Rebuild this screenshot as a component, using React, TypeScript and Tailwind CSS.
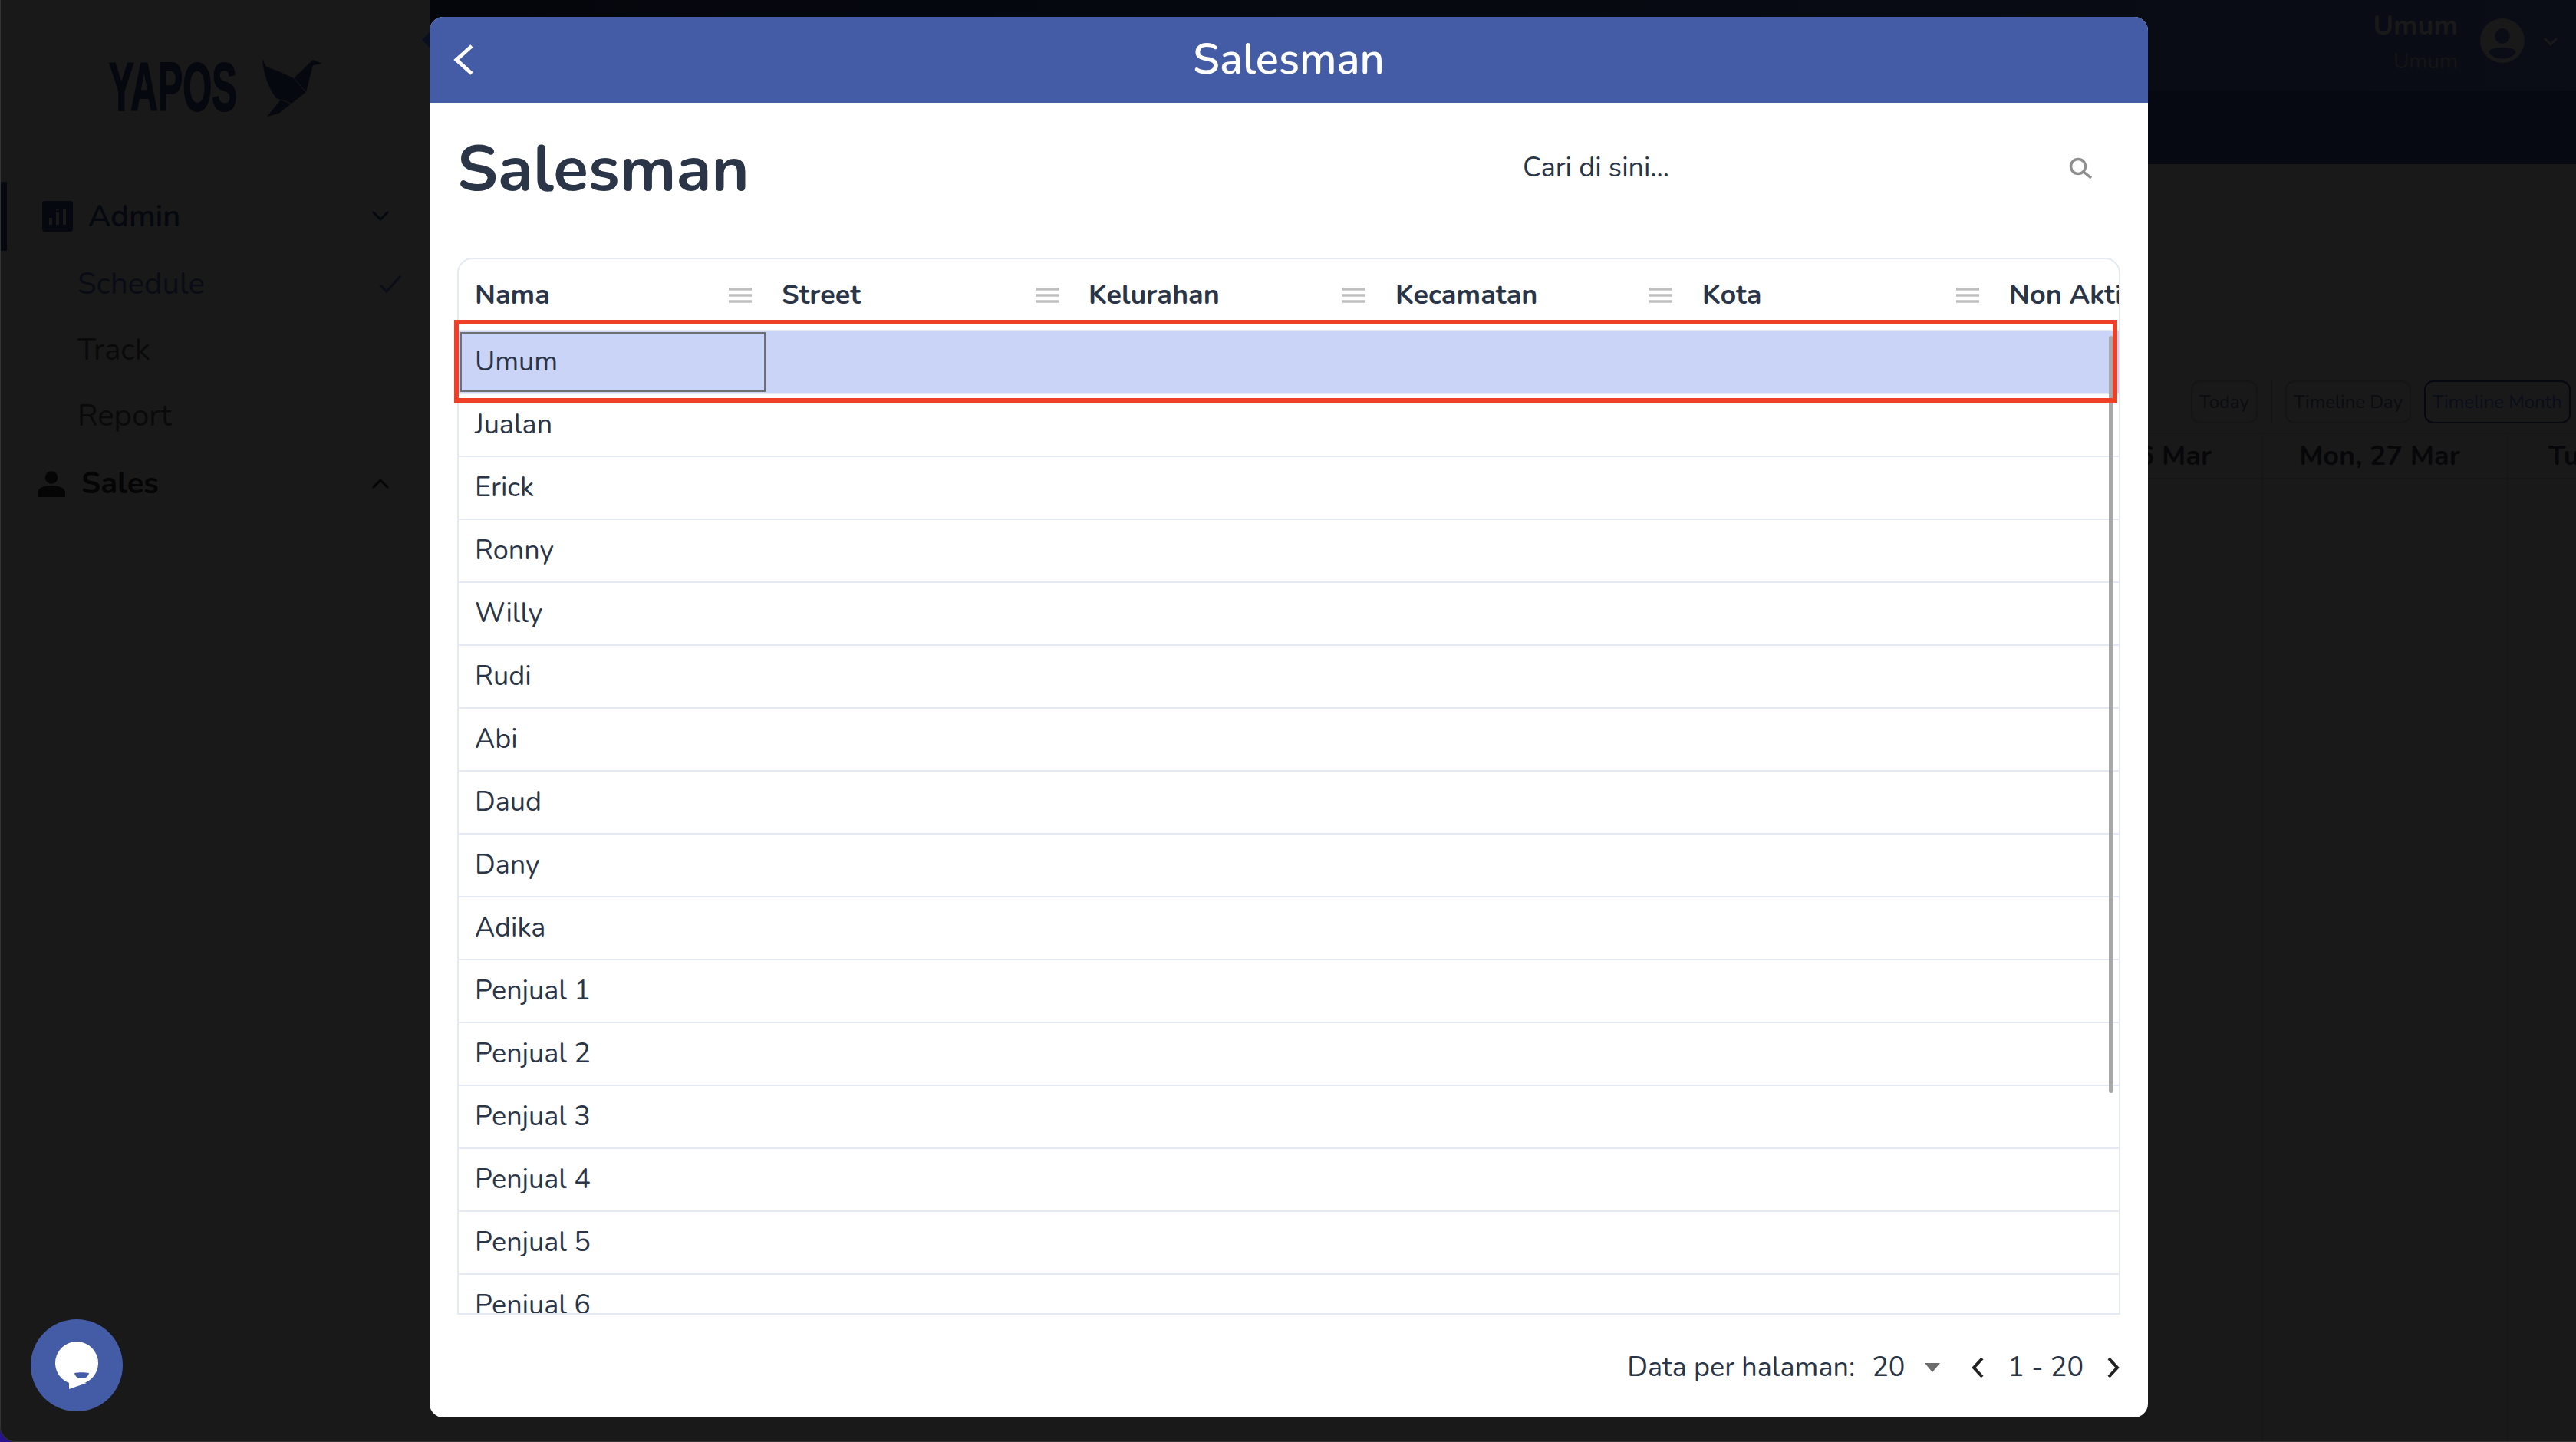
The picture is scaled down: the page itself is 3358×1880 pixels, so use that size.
import React from "react";

const rows = ["Jualan","Erick","Ronny","Willy","Rudi","Abi","Daud","Dany","Adika","Penjual 1","Penjual 2","Penjual 3","Penjual 4","Penjual 5","Penjual 6"];
const cols = ["Nama","Street","Kelurahan","Kecamatan","Kota","Non Aktif"];

function Grip() {
  return (
    <svg width="30" height="20" viewBox="0 0 30 20" className="shrink-0">
      <path d="M0 2h30M0 10h30M0 18h30" stroke="#c0c0c0" strokeWidth="3.500" />
    </svg>
  );
}

export default function App() {
  return (
    <div className="relative w-[3358px] h-[1880px] overflow-hidden bg-[#2a1190] font-['Nunito','Noto_Sans',sans-serif] text-[#2a3547]">
      <div className="flex h-full rounded-bl-[20px] overflow-hidden bg-[#191919]">
        <aside className="w-[560px] shrink-0 bg-[#191919] flex flex-col">
          <div className="h-[237px] pt-[63px] pl-[142px] flex items-start">
            <span className="block w-[198px] text-[89px] leading-[100px] font-bold text-[#05080f] font-['Liberation_Sans',sans-serif] scale-x-[0.55] origin-left whitespace-nowrap [-webkit-text-stroke:2px_#05080f]">YAPOS</span>
            <svg width="82" height="80" viewBox="0 0 82 80" className="mt-[12px]" fill="#05080f">
              <path d="M2 2C3 20 10 40 20 53L26 55 8 77 23 73 40 60 59 45 68 10 80 8 68 3 43 27 23 18 7 12z" />
              <path d="M43 27L59 45M26 55L40 60" stroke="#191919" strokeWidth="1" fill="none" />
            </svg>
          </div>
          <div className="h-[90px] flex items-center border-l-[9px] border-[#05080f] pl-[46px] pr-[52px]">
            <svg width="40" height="40" viewBox="0 0 40 40" className="shrink-0">
              <rect width="40" height="40" rx="4" fill="#05080f" />
              <path d="M9 22h4v9H9zM18 15h4v16h-4zM18 10h4v2h-4zM27 10h4v21h-4z" fill="#191919" />
            </svg>
            <span className="ml-[20px] text-[40px] font-semibold text-[#05080f] flex-1">Admin</span>
            <svg width="24" height="16" viewBox="0 0 24 16" fill="none" stroke="#05080f" strokeWidth="3"><path d="M2 2l10 10L22 2"/></svg>
          </div>
          <div className="flex flex-col text-[40px] pl-[101px] text-[#090c14]">
            <div className="h-[86px] flex items-center pr-[36px] justify-between">
              <span>Schedule</span>
              <svg width="30" height="24" viewBox="0 0 30 24" fill="none" stroke="#0b0e16" strokeWidth="3"><path d="M2 14l8 8L28 2"/></svg>
            </div>
            <div className="h-[86px] flex items-center text-[#0a0a0a]">Track</div>
            <div className="h-[86px] flex items-center text-[#0a0a0a]">Report</div>
          </div>
          <div className="h-[90px] flex items-center pl-[49px] pr-[52px]">
            <svg width="36" height="36" viewBox="0 0 24 24" fill="#050505"><circle cx="12" cy="7" r="5.500"/><path d="M0 24v-4c0-4 6-6 12-6s12 2 12 6v4z"/></svg>
            <span className="ml-[21px] text-[40px] font-bold text-[#050505] flex-1">Sales</span>
            <svg width="24" height="16" viewBox="0 0 24 16" fill="none" stroke="#050505" strokeWidth="3"><path d="M2 14L12 4l10 10"/></svg>
          </div>
        </aside>
        <main className="flex-1 flex flex-col">
          <header className="h-[118px] bg-linear-to-r from-[#04060c] to-[#0a0d15] flex items-start justify-end pr-[23px] pt-[14px]">
            <div className="text-right mr-[29px]">
              <div className="text-[36px] leading-[40px] font-bold text-[#191919]">Umum</div>
              <div className="text-[28px] leading-[40px] mt-[6px] text-[#151515]">Umum</div>
            </div>
            <svg width="58" height="60" viewBox="0 0 24 24" className="mt-[9px]" fill="#191919" fillRule="evenodd">
              <path d="M12 0a12 12 0 100 24 12 12 0 000-24zM12 5.400a4.100 4.100 0 110 8.200 4.100 4.100 0 010-8.200zM4.600 18C6 15 18 15 19.400 18 17 23 7 23 4.600 18z"/>
            </svg>
            <svg width="20" height="14" viewBox="0 0 20 14" className="mt-[34px] ml-[24px]" fill="none" stroke="#191919" strokeWidth="3"><path d="M2 2l8 8 8-8"/></svg>
          </header>
          <div className="h-[96px] bg-[#060912]" />
          <div className="flex-1 flex flex-col pt-[282px]">
            <div className="flex justify-end items-center gap-[17px] pr-[7px] text-[#0b0c10] text-[24px]">
              <span className="h-[56px] w-[87px] flex items-center justify-center border-2 border-[#151515] rounded-[12px]">Today</span>
              <span className="w-[2px] h-[56px] bg-[#131313]" />
              <span className="h-[56px] w-[164px] flex items-center justify-center border-2 border-[#151515] rounded-[12px]">Timeline Day</span>
              <span className="h-[56px] w-[191px] flex items-center justify-center border-2 border-[#05080f] rounded-[12px] text-[#0a0d1a]">Timeline Month</span>
            </div>
            <div className="mt-[12px] h-[61px] shrink-0 flex justify-end text-[36px] font-bold text-[#07070a] border-y-2 border-[#161616] overflow-hidden">
              <div className="w-[320px] flex items-center justify-end pr-[65px] border-r-2 border-[#161616] whitespace-nowrap">26 Mar</div>
              <div className="w-[320px] flex items-center justify-center pr-[14px] border-r-2 border-[#161616] whitespace-nowrap">Mon, 27 Mar</div>
              <div className="w-[88px] pl-[52px] flex items-center whitespace-nowrap">Tue, 28 Mar</div>
            </div>
            <div className="flex-1 flex justify-end">
              <div className="w-[320px] border-r-2 border-[#161616]" />
              <div className="w-[320px] border-r-2 border-[#161616]" />
              <div className="w-[88px]" />
            </div>
          </div>
        </main>
      </div>
      <div className="absolute inset-0 border-l border-b border-[#343434] rounded-bl-[20px] pointer-events-none" />

      {/* collapse button peeking out from behind the modal */}
      <div className="absolute left-[553px] top-[45px] w-[14px] h-[14px] rotate-45 bg-[#0a0f20]" />

      {/* modal */}
      <div className="absolute left-[560px] top-[22px] w-[2240px] h-[1826px] bg-white rounded-[18px] overflow-hidden flex flex-col">
        <div className="h-[112px] shrink-0 bg-[#445ca5] relative flex items-center justify-center text-white text-[56px] font-semibold">
          <svg width="26" height="40" viewBox="0 0 26 40" fill="none" stroke="#fff" strokeWidth="5" className="absolute left-[31px] top-[36px]"><path d="M24 2L4 20l20 18"/></svg>
          Salesman
        </div>
        <div className="flex-1 flex flex-col px-[36px] min-h-0">
          <div className="h-[202px] shrink-0 flex items-start">
            <h1 className="text-[84px] leading-[110px] mt-[32px] font-bold flex-1">Salesman</h1>
            <div className="w-[779px] mt-[60px] flex items-center justify-between text-[36px] leading-[50px] pr-[37px]">
              <span>Cari di sini...</span>
              <svg width="30" height="28" viewBox="0 0 30 28" fill="none" stroke="#8f8f8f" strokeWidth="3.500"><circle cx="12" cy="12" r="9.500"/><path d="M19 19l10 8"/></svg>
            </div>
          </div>
          <div className="relative h-[1378px] shrink-0 border-2 border-[#e5e9f2] rounded-t-[20px] overflow-hidden">
            <div className="flex h-[92px] items-center font-bold text-[36px] whitespace-nowrap">
              {cols.map((c) => (
                <div key={c} className="w-[400px] shrink-0 flex items-center justify-between pl-[21px] pr-[18px] pt-[2px]">
                  <span>{c}</span>
                  <Grip />
                </div>
              ))}
            </div>
            <div className="h-[84px] bg-[#cad4f6] border-y-2 border-[#e5e9f2] text-[36px] flex items-center">
              <div className="w-[398px] h-[78px] ml-[2px] border-2 border-[#6f6f74] flex items-center pl-[17px]">Umum</div>
            </div>
            {rows.map((r) => (
              <div key={r} className="h-[82px] border-b-2 border-[#e5e9f2] flex items-center pl-[21px] text-[36px]">{r}</div>
            ))}
            <div className="absolute right-[7px] top-[100px] w-[6px] h-[987px] rounded-full bg-[#a8a8a8]" />
          </div>
          <div className="flex-1 flex items-center justify-end text-[36px] pt-[4px]">
            <span>Data per halaman:</span>
            <span className="ml-[22px]">20</span>
            <svg width="20" height="12" viewBox="0 0 20 12" className="ml-[26px]"><path d="M0 0h20L10 12z" fill="#6b6b6b"/></svg>
            <svg width="18" height="28" viewBox="0 0 18 28" fill="none" stroke="#222" strokeWidth="4" className="ml-[40px]"><path d="M15 2L4 14l11 12"/></svg>
            <span className="ml-[30px]">1 - 20</span>
            <svg width="18" height="28" viewBox="0 0 18 28" fill="none" stroke="#222" strokeWidth="4" className="ml-[30px]"><path d="M3 2l11 12L3 26"/></svg>
          </div>
        </div>
      </div>

      {/* annotation */}
      <div className="absolute left-[592px] top-[417px] w-[2168px] h-[108px] border-[6px] border-[#ee4026]" />

      {/* chat */}
      <div className="absolute left-[40px] top-[1720px] w-[120px] h-[120px] rounded-full bg-[#445ca5] flex items-center justify-center">
        <svg width="58" height="62" viewBox="0 0 58 62" fill="#fff">
          <circle cx="29" cy="28" r="28" />
          <path d="M19 50L19 62 42 54z" />
          <path d="M26 41c5-1 14-1 19 0-1 5-5 7-9.500 7S27 46 26 41z" fill="#445ca5" />
        </svg>
      </div>
    </div>
  );
}
